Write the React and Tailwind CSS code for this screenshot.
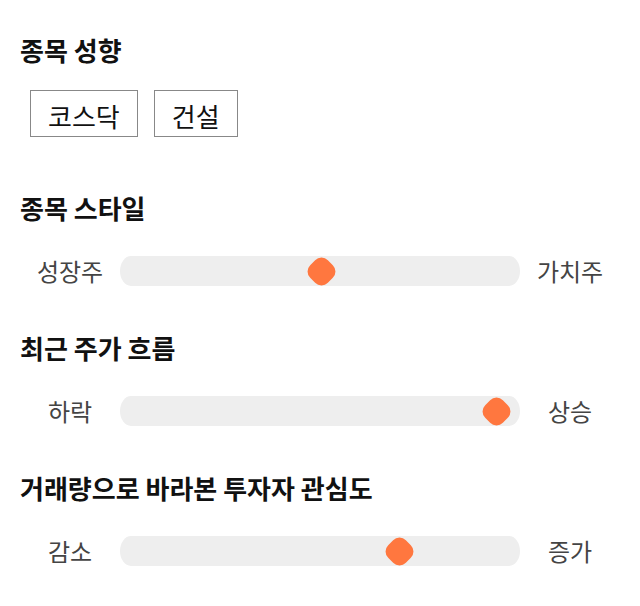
const font = { fontFamily: '"Noto Sans CJK KR", "Noto Sans", sans-serif' };

const tags = ['코스닥', '건설'];

const sliders = [
  { title: '종목 스타일', left: '성장주', right: '가치주', value: 0.505 },
  { title: '최근 주가 흐름', left: '하락', right: '상승', value: 0.977 },
  { title: '거래량으로 바라본 투자자 관심도', left: '감소', right: '증가', value: 0.715 },
];

function Heading({ children }) {
  return <h2 className="text-[26px] leading-[30px] font-bold text-[#111]">{children}</h2>;
}

function Slider({ left, right, value }) {
  return (
    <div className="grid grid-cols-[100px_400px_100px] items-center">
      <span className="text-center text-[24px] leading-[30px] text-[#444]">{left}</span>
      <div className="relative h-[30px] bg-[#eeeeee] rounded-[11px/15px]">
        <div className="absolute top-0 h-[30px] w-[30px] flex items-center justify-center" style={{ left: `${value * 370}px` }}>
          <div className="w-[25px] h-[25px] rotate-45 rounded-[9px] bg-[#ff773f]" />
        </div>
      </div>
      <span className="text-center text-[24px] leading-[30px] text-[#444]">{right}</span>
    </div>
  );
}

export default function App() {
  return (
    <div className="bg-white w-[640px] min-h-[606px] px-5 pt-[35px]" style={font}>
      <Heading>종목 성향</Heading>
      <div className="flex gap-4 mt-[25px] ml-[10px]">
        {tags.map((t) => (
          <span key={t} className="border border-[#888] px-[17px] pt-[4px] h-[47px] flex items-center text-[26px] text-[#111]">
            {t}
          </span>
        ))}
      </div>
      <div className="mt-[56px] flex flex-col gap-[47px]">
        {sliders.map((s) => (
          <div key={s.title} className="flex flex-col gap-[33px]">
            <Heading>{s.title}</Heading>
            <Slider left={s.left} right={s.right} value={s.value} />
          </div>
        ))}
      </div>
    </div>
  );
}
